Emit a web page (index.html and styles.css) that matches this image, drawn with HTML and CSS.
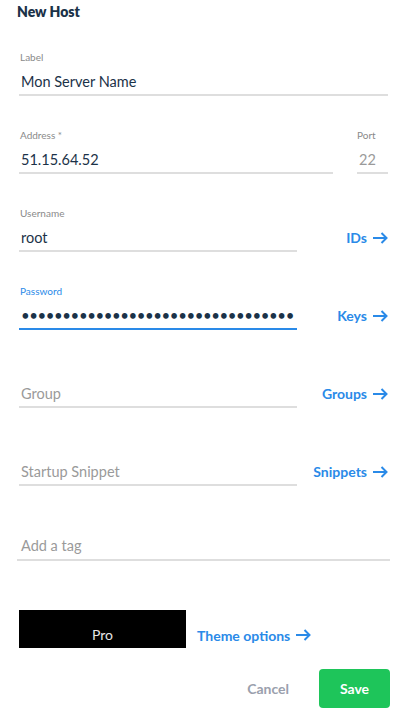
FILE: index.html
```html
<!DOCTYPE html>
<html>
<head>
<meta charset="utf-8">
<link rel="stylesheet" href="styles.css">
</head>
<body>
<div class="page">
  <h1 class="title">New Host</h1>

  <div class="field first">
    <div class="label">Label</div>
    <div class="input">Mon Server Name</div>
  </div>

  <div class="row">
    <div class="field grow">
      <div class="label">Address *</div>
      <div class="input">51.15.64.52</div>
    </div>
    <div class="field port">
      <div class="label">Port</div>
      <div class="input muted">22</div>
    </div>
  </div>

  <div class="row">
    <div class="field short">
      <div class="label">Username</div>
      <div class="input">root</div>
    </div>
    <a class="link">IDs <svg class="arrow" viewBox="0 0 16 12"><path d="M1 6H14.5M9.5 1L14.5 6L9.5 11"/></svg></a>
  </div>

  <div class="row">
    <div class="field short">
      <div class="label active">Password</div>
      <div class="input focus"><span class="dots">•••••••••••••••••••••••••••••••••</span></div>
    </div>
    <a class="link">Keys <svg class="arrow" viewBox="0 0 16 12"><path d="M1 6H14.5M9.5 1L14.5 6L9.5 11"/></svg></a>
  </div>

  <div class="row">
    <div class="field short">
      <div class="label"></div>
      <div class="input placeholder">Group</div>
    </div>
    <a class="link">Groups <svg class="arrow" viewBox="0 0 16 12"><path d="M1 6H14.5M9.5 1L14.5 6L9.5 11"/></svg></a>
  </div>

  <div class="row">
    <div class="field short">
      <div class="label"></div>
      <div class="input placeholder">Startup Snippet</div>
    </div>
    <a class="link">Snippets <svg class="arrow" viewBox="0 0 16 12"><path d="M1 6H14.5M9.5 1L14.5 6L9.5 11"/></svg></a>
  </div>

  <div class="field tag">
    <div class="input placeholder">Add a tag</div>
  </div>

  <div class="theme-row">
    <div class="theme">Pro</div>
    <a class="link">Theme options <svg class="arrow" viewBox="0 0 16 12"><path d="M1 6H14.5M9.5 1L14.5 6L9.5 11"/></svg></a>
  </div>

  <div class="actions">
    <button class="cancel">Cancel</button>
    <button class="save">Save</button>
  </div>
</div>
</body>
</html>
```

FILE: styles.css
```css
* { box-sizing: border-box; }
body {
  margin: 0;
  background: #fff;
  font-family: "Lato", "Noto Sans", sans-serif;
  color: #1b3248;
}
.page {
  padding: 3px 17px 0 19px;
}
.title {
  margin: 0 0 0 -2px;
  font-size: 14px;
  line-height: 18px;
  font-weight: 800;
  color: #1b3248;
}
.field {
  display: flex;
  flex-direction: column;
  margin-top: 33px;
}
.field.first { margin-top: 30px; }
.label {
  height: 12px;
  font-size: 10px;
  line-height: 12px;
  color: #8a8a8a;
  padding-left: 1px;
  margin-bottom: 8px;
}
.label.active { color: #2a8ae8; }
.input {
  height: 25px;
  font-size: 14.5px;
  line-height: 21px;
  padding-left: 2px;
  border-bottom: 2px solid #dedede;
  color: #1b3248;
  white-space: nowrap;
  overflow: hidden;
}
.input.focus { border-bottom-color: #2a8ae8; }
.input.placeholder { color: #9a9a9a; }
.input.muted { color: #9a9a9a; }
.row {
  display: flex;
  align-items: flex-end;
}
.row .field { margin-top: 33px; }
.grow { flex: 1; }
.port { width: 31px; margin-left: 24px; }
.port .label { padding-left: 0; }
.port .input { padding-left: 2px; }
.short { width: 278px; flex-shrink: 0; }
.link {
  margin-left: auto;
  display: flex;
  align-items: center;
  gap: 5px;
  height: 25px;
  padding-bottom: 4px;
  font-size: 14px;
  font-weight: 700;
  color: #2a8ae8;
  white-space: nowrap;
}
.arrow {
  width: 16px;
  height: 12px;
  fill: none;
  stroke: #2a8ae8;
  stroke-width: 2;
}
.dots {
  font-size: 15px;
  letter-spacing: -0.43px;
  color: #1b3248;
}
.tag {
  margin: 48px -2px 0 -2px;
}
.tag .input { padding-left: 4px; height: 27px; padding-top: 1px; }
.theme-row {
  display: flex;
  align-items: flex-end;
  gap: 11px;
  margin-top: 49px;
}
.theme-row .link {
  margin-left: 0;
  padding-bottom: 0;
  height: 26px;
  align-items: center;
}
.theme {
  width: 167px;
  height: 38px;
  background: #000;
  color: #e6e6e6;
  font-size: 14px;
  display: flex;
  align-items: flex-end;
  justify-content: center;
  padding-bottom: 5px;
}
.actions {
  display: flex;
  justify-content: flex-end;
  align-items: center;
  gap: 30px;
  margin-top: 21px;
  margin-right: -2px;
}
.cancel {
  border: 0;
  background: none;
  font-family: inherit;
  font-size: 14px;
  font-weight: 700;
  color: #9aa0ad;
  padding: 0;
}
.save {
  border: 0;
  width: 71px;
  height: 39px;
  border-radius: 4px;
  background: #1ec55a;
  color: #fff;
  font-family: inherit;
  font-size: 14px;
  font-weight: 700;
}
```
